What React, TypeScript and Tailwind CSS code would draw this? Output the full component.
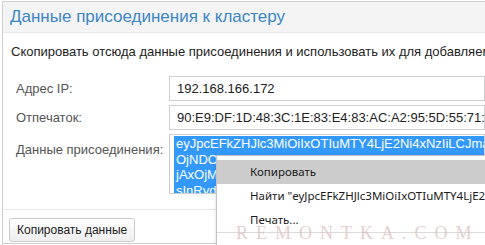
const sans = { fontFamily: '"Liberation Sans", Arial, sans-serif' };

const joinLines = [
  "eyJpcEFkZHJlc3MiOiIxOTIuMTY4LjE2Ni4xNzIiLCJmaW5nZXJwcmludCI6",
  "OjNDOjFFOjgzOkU0OjgzOkFDOkEyOjk1OjVEOjU1OjcxOjM2In0",
  "jAxOjM5OkRGOjFEOjQ4OjNDOjFFOjgzOkU0OjgzOkFD",
  "sInRydXN0ZWQiOnRydWUsInZlcnNpb24iOjF9",
];

function Field({ label, value }: { label: string; value: string }) {
  return (
    <div className="grid grid-cols-[166px_1fr] items-center mb-[4px]">
      <div className="pl-[13px] text-[13px] text-[#555]">{label}</div>
      <div className="h-[25px] border border-[#cfcfcf] pl-[7px] flex items-center text-[13px] text-[#222] whitespace-nowrap overflow-hidden">
        {value}
      </div>
    </div>
  );
}

function ContextMenu() {
  return (
    <div
      className="absolute left-[216px] top-[155px] w-[300px] h-[100px] bg-white border border-[#c4c4c4] shadow-[1px_2px_4px_rgba(0,0,0,0.25)] pt-[4px] text-[11.5px] text-[#1a1a1a]"
      style={{ fontFamily: '"Noto Sans", "Open Sans", sans-serif' }}
    >
      <div className="h-[24px] bg-[#cccccc] pl-[33px] flex items-center">Копировать</div>
      <div className="h-[24px] pl-[33px] flex items-center whitespace-nowrap">
        Найти "eyJpcEFkZHJlc3MiOiIxOTIuMTY4LjE2Ni4xNzIiLCJm..."
      </div>
      <div className="h-[23px] pl-[33px] flex items-center">Печать...</div>
      <div className="mt-[1px] border-t border-[#dcdcdc]" />
    </div>
  );
}

export default function App() {
  return (
    <div className="relative w-[485px] h-[245px] bg-white overflow-hidden" style={sans}>
      <div className="ml-[2px] mt-px h-[243px] border border-r-0 border-[#cfcfcf] flex flex-col">
        <div className="h-[31px] shrink-0 bg-[#f4f4f4] border-b border-[#e6e6e6] pl-[7px] flex items-center text-[17px] text-[#3d86c6] whitespace-nowrap">
          Данные присоединения к кластеру
        </div>

        <div className="pt-[11px] pl-[8px] text-[13px] leading-[16px] text-[#222] whitespace-nowrap">
          Скопировать отсюда данные присоединения и использовать их для добавляемого узла.
        </div>

        <div className="mt-[16px]">
          <Field label="Адрес IP:" value="192.168.166.172" />
          <Field label="Отпечаток:" value="90:E9:DF:1D:48:3C:1E:83:E4:83:AC:A2:95:5D:55:71:36" />
          <div className="grid grid-cols-[166px_1fr]">
            <div className="pl-[13px] pt-[6px] text-[13px] text-[#555]">Данные присоединения:</div>
            <div className="h-[60px] border border-[#cfcfcf] pl-[4px] pt-[1px] overflow-hidden text-[13px] leading-[15.5px]">
              {joinLines.map((l) => (
                <div key={l} className="bg-[#3399ff] text-white pl-[2px] whitespace-nowrap overflow-hidden">
                  {l}
                </div>
              ))}
            </div>
          </div>
        </div>

        <div className="mt-[15px] border-t border-[#e8e8e8]" />

        <div className="pl-[6px] pt-[7px]">
          <button className="h-[24px] px-[7px] rounded-[3px] border border-[#cacaca] bg-gradient-to-b from-white to-[#eeeeee] text-[12px] text-[#222]">
            Копировать данные
          </button>
        </div>
      </div>

      <ContextMenu />

      <div
        className="absolute left-[236px] top-[220px] text-[18px] tracking-[8px] text-[#d9bcbc] opacity-70 whitespace-nowrap pointer-events-none"
        style={{ fontFamily: '"Liberation Serif", "Times New Roman", serif' }}
      >
        REMONTKA.COM
      </div>
    </div>
  );
}
